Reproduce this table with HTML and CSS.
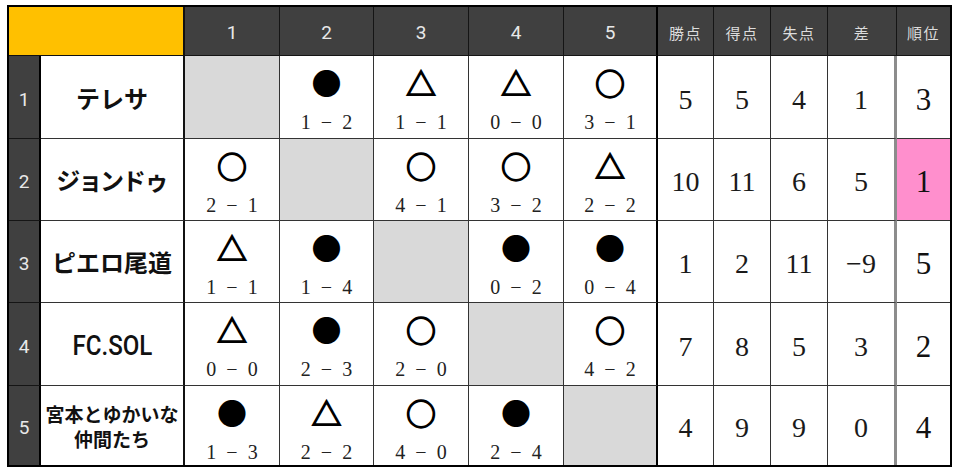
FILE: index.html
```html
<!DOCTYPE html>
<html lang="ja">
<head>
<meta charset="utf-8">
<title>星取表</title>
<link rel="stylesheet" href="styles.css">
</head>
<body>
<div class="board">
  <div class="cell corner"></div>
  <div class="cell head">1</div>
  <div class="cell head">2</div>
  <div class="cell head">3</div>
  <div class="cell head">4</div>
  <div class="cell head c5">5</div>
  <div class="cell head jp">勝点</div>
  <div class="cell head jp">得点</div>
  <div class="cell head jp">失点</div>
  <div class="cell head jp diff">差</div>
  <div class="cell head jp rank">順位</div>

  <div class="cell num">1</div>
  <div class="cell name">テレサ</div>
  <div class="cell self"></div>
  <div class="cell match"><span class="mark">●</span><span class="score">1 − 2</span></div>
  <div class="cell match"><span class="mark open">△</span><span class="score">1 − 1</span></div>
  <div class="cell match"><span class="mark open">△</span><span class="score">0 − 0</span></div>
  <div class="cell match c5"><span class="mark open">○</span><span class="score">3 − 1</span></div>
  <div class="cell stat">5</div>
  <div class="cell stat">5</div>
  <div class="cell stat">4</div>
  <div class="cell stat diff">1</div>
  <div class="cell stat rank">3</div>

  <div class="cell num">2</div>
  <div class="cell name name--tight">ジョンドゥ</div>
  <div class="cell match"><span class="mark open">○</span><span class="score">2 − 1</span></div>
  <div class="cell self"></div>
  <div class="cell match"><span class="mark open">○</span><span class="score">4 − 1</span></div>
  <div class="cell match"><span class="mark open">○</span><span class="score">3 − 2</span></div>
  <div class="cell match c5"><span class="mark open">△</span><span class="score">2 − 2</span></div>
  <div class="cell stat">10</div>
  <div class="cell stat">11</div>
  <div class="cell stat">6</div>
  <div class="cell stat diff">5</div>
  <div class="cell stat rank rank--top">1</div>

  <div class="cell num">3</div>
  <div class="cell name">ピエロ尾道</div>
  <div class="cell match"><span class="mark open">△</span><span class="score">1 − 1</span></div>
  <div class="cell match"><span class="mark">●</span><span class="score">1 − 4</span></div>
  <div class="cell self"></div>
  <div class="cell match"><span class="mark">●</span><span class="score">0 − 2</span></div>
  <div class="cell match c5"><span class="mark">●</span><span class="score">0 − 4</span></div>
  <div class="cell stat">1</div>
  <div class="cell stat">2</div>
  <div class="cell stat">11</div>
  <div class="cell stat diff">−9</div>
  <div class="cell stat rank">5</div>

  <div class="cell num">4</div>
  <div class="cell name"><span class="latin">FC.SOL</span></div>
  <div class="cell match"><span class="mark open">△</span><span class="score">0 − 0</span></div>
  <div class="cell match"><span class="mark">●</span><span class="score">2 − 3</span></div>
  <div class="cell match"><span class="mark open">○</span><span class="score">2 − 0</span></div>
  <div class="cell self"></div>
  <div class="cell match c5"><span class="mark open">○</span><span class="score">4 − 2</span></div>
  <div class="cell stat">7</div>
  <div class="cell stat">8</div>
  <div class="cell stat">5</div>
  <div class="cell stat diff">3</div>
  <div class="cell stat rank">2</div>

  <div class="cell num">5</div>
  <div class="cell name name--small">宮本とゆかいな<br>仲間たち</div>
  <div class="cell match"><span class="mark">●</span><span class="score">1 − 3</span></div>
  <div class="cell match"><span class="mark open">△</span><span class="score">2 − 2</span></div>
  <div class="cell match"><span class="mark open">○</span><span class="score">4 − 0</span></div>
  <div class="cell match"><span class="mark">●</span><span class="score">2 − 4</span></div>
  <div class="cell self c5"></div>
  <div class="cell stat">4</div>
  <div class="cell stat">9</div>
  <div class="cell stat">9</div>
  <div class="cell stat diff">0</div>
  <div class="cell stat rank">4</div>
</div>
</body>
</html>
```

FILE: styles.css
```css
html, body {
  margin: 0;
  padding: 0;
  background: #ffffff;
}

body {
  font-family: "Noto Sans CJK JP", "Noto Sans", sans-serif;
  color: #111;
}

.board {
  display: grid;
  grid-template-columns: 32px 144px 95px 94px 95px 95px 94px 56px 57px 57px 69px 53px;
  grid-template-rows: 49px 83px 82px 82px 83px 79px;
  width: max-content;
  margin: 5px 0 0 7px;
  border: 2px solid #000;
}

.cell {
  box-sizing: border-box;
  display: flex;
  align-items: center;
  justify-content: center;
  border-right: 1px solid #333;
  border-bottom: 1px solid #333;
  background: #fff;
}

.board > .cell:nth-last-child(-n+12) {
  border-bottom: 0;
}

.corner {
  grid-column: span 2;
  background: #ffc000;
  border-right: 2px solid #111;
  border-bottom: 1px solid #111;
}

.head {
  background: #404040;
  color: #e8e8e8;
  font-family: "Roboto", "Liberation Sans", sans-serif;
  font-size: 19px;
  border-right: 1px solid #151515;
  border-bottom: 1px solid #151515;
  padding-top: 2px;
}

.head.jp {
  font-family: "Noto Sans CJK JP", sans-serif;
  font-size: 15px;
  letter-spacing: 1.5px;
  color: #dcdcdc;
}

.num {
  background: #404040;
  color: #e8e8e8;
  font-family: "Roboto", "Liberation Sans", sans-serif;
  font-size: 19px;
  border-right: 2px solid #000;
  border-bottom: 1px solid #151515;
  padding-top: 4px;
}

.name {
  font-weight: 700;
  font-size: 24px;
  border-right: 2px solid #111;
  text-align: center;
  color: #111;
}

.name--tight {
  font-feature-settings: "palt";
  letter-spacing: 1px;
}

.latin {
  display: inline-block;
  font-family: "Roboto", sans-serif;
  font-weight: 500;
  font-size: 28px;
  transform: scaleX(0.86);
  padding-top: 2px;
}

.name--small {
  font-size: 19px;
  line-height: 25px;
  padding-top: 1px;
}

.self {
  background: #d9d9d9;
}

.match {
  flex-direction: column;
  justify-content: flex-start;
  padding-top: 10px;
}

.mark {
  display: block;
  height: 32px;
  line-height: 32px;
  font-size: 30px;
  font-weight: 700;
  color: #000;
}

.mark.open {
  -webkit-text-stroke: 1.3px #000;
}

.score {
  display: block;
  margin-top: 14px;
  height: 20px;
  line-height: 20px;
  font-family: "Liberation Serif", "DejaVu Serif", serif;
  font-size: 20px;
  word-spacing: 5px;
  color: #222;
}

.c5 {
  border-right: 2px solid #000;
}

.head.c5 {
  border-right: 2px solid #000;
}

.stat {
  font-family: "Liberation Serif", "DejaVu Serif", serif;
  font-size: 28px;
  color: #1a1a1a;
  padding-top: 5px;
}

.stat.diff {
  border-right: 3px solid #8c8c8c;
}

.rank {
  border-right: 0;
}

.stat.rank {
  font-size: 31px;
  color: #111;
}

.rank--top {
  background: #ff8fcd;
}
```
